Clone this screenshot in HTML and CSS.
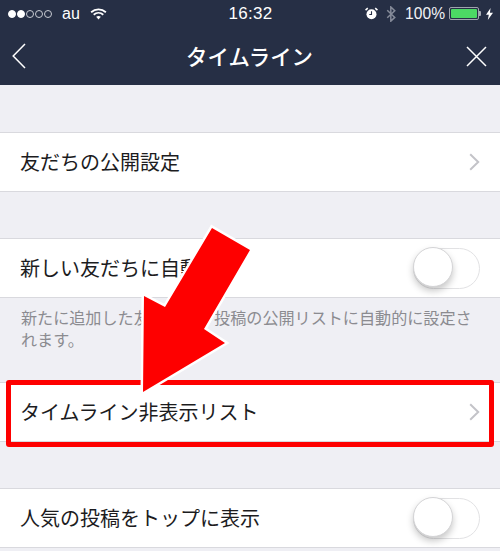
FILE: index.html
```html
<!DOCTYPE html>
<html lang="ja">
<head>
<meta charset="utf-8">
<title>タイムライン</title>
<link rel="stylesheet" href="styles.css">
</head>
<body>
<div class="page">
  <header class="header">
    <div class="status">
      <div class="status-left">
        <span class="dots"><i class="dot on"></i><i class="dot on"></i><i class="dot"></i><i class="dot"></i><i class="dot"></i></span>
        <span class="carrier">au</span>
        <svg class="wifi" width="17" height="12" viewBox="0 0 18 13"><path d="M1 4.6C5.6.4 12.4.4 17 4.6" fill="none" stroke="#fff" stroke-width="1.9"/><path d="M3.8 7.3c3-2.6 7.4-2.6 10.4 0" fill="none" stroke="#fff" stroke-width="1.9"/><path d="M6.5 9.6c1.5-1.1 3.5-1.1 5 0L9 12.4z" fill="#fff"/></svg>
      </div>
      <div class="clock">16:32</div>
      <div class="status-right">
        <svg class="alarm" width="13" height="13" viewBox="0 0 14 14"><circle cx="7" cy="7.8" r="5.4" fill="#fff"/><path d="M7 4.6v3.5H4.6" fill="none" stroke="#262f45" stroke-width="1.2"/><path d="M.6 3.4 3 1.2M13.4 3.4 11 1.2" stroke="#fff" stroke-width="1.6"/></svg>
        <svg class="bt" width="10" height="16" viewBox="0 0 10 17"><path d="M1 4.5l8 7.6-4.2 4V1l4.2 4-8 7.5" fill="none" stroke="#858b99" stroke-width="1.6"/></svg>
        <span class="percent">100%</span>
        <span class="battery"><span class="battery-fill"></span></span>
        <span class="battery-cap"></span>
        <svg class="bolt" width="7" height="12" viewBox="0 0 7 12"><path d="M4.6 0 0 6.8h2.8L1.8 12 7 4.8H3.9z" fill="#fff"/></svg>
      </div>
    </div>
    <nav class="nav">
      <svg class="nav-back" width="14" height="26" viewBox="0 0 14 26"><path d="M13 1 1.2 13 13 25" fill="none" stroke="#fff" stroke-width="1.5"/></svg>
      <h1 class="title">タイムライン</h1>
      <svg class="nav-close" width="21" height="21" viewBox="0 0 21 21"><path d="M1 1l19 19M20 1 1 20" fill="none" stroke="#fff" stroke-width="1.5"/></svg>
    </nav>
  </header>

  <section class="group">
    <div class="row">
      <span>友だちの公開設定</span>
      <svg class="chev" width="11" height="18" viewBox="0 0 11 18"><path d="M1.2 1.2 9.2 9l-8 7.8" fill="none" stroke="#c3c3c8" stroke-width="2"/></svg>
    </div>
  </section>

  <section class="group">
    <div class="row">
      <span>新しい友だちに自動化</span>
      <span class="switch"><span class="knob"></span></span>
    </div>
  </section>
  <p class="note">新たに追加した友だちを、投稿の公開リストに自動的に設定されます。</p>

  <section class="group group-tight">
    <div class="row">
      <span>タイムライン非表示リスト</span>
      <svg class="chev" width="11" height="18" viewBox="0 0 11 18"><path d="M1.2 1.2 9.2 9l-8 7.8" fill="none" stroke="#c3c3c8" stroke-width="2"/></svg>
    </div>
  </section>

  <section class="group">
    <div class="row">
      <span>人気の投稿をトップに表示</span>
      <span class="switch"><span class="knob"></span></span>
    </div>
  </section>

  <div class="highlight"></div>
  <svg class="arrow" width="500" height="551" viewBox="0 0 500 551"><path class="arrow-shape" d="M212 228 250 250 204 329 225 343 143 392 144 296 165 307Z"/></svg>
</div>
</body>
</html>
```
FILE: styles.css
```css
* { box-sizing: border-box; }
html, body { margin: 0; padding: 0; }
body {
  background: #efeff4;
  font-family: "Noto Sans CJK JP", "Liberation Sans", sans-serif;
  overflow: hidden;
}
.page {
  position: relative;
  width: 500px;
  height: 551px;
  overflow: hidden;
  background: #efeff4;
}
.header {
  height: 85px;
  background: #262f45;
  color: #fff;
}
.status {
  height: 27px;
  display: grid;
  grid-template-columns: 1fr auto 1fr;
  align-items: center;
  padding: 0 7px 0 8px;
  font-family: "Liberation Sans", sans-serif;
  font-size: 16px;
}
.status-left, .status-right { display: flex; align-items: center; }
.status-right { justify-content: flex-end; }
.dots { display: flex; gap: 1px; }
.dot {
  width: 8px;
  height: 8px;
  border-radius: 50%;
  border: 1px solid #c9ccd3;
}
.dot.on { background: #fff; border-color: #fff; }
.carrier { margin-left: 10px; }
.wifi { margin-left: 10px; }
.clock { font-size: 17px; letter-spacing: .3px; }
.bt { margin-left: 8px; }
.percent { margin-left: 9px; color: #f2f3f5; font-size: 15.6px; }
.battery {
  margin-left: 4px;
  width: 30px;
  height: 13px;
  border: 1px solid #9fa3ad;
  border-radius: 2px;
  padding: 1px;
  display: flex;
}
.battery-fill { flex: 1; background: #4cd964; border-radius: 1px; }
.battery-cap { width: 2px; height: 5px; background: #a8acb5; border-radius: 0 1px 1px 0; }
.bolt { margin-left: 5px; }
.nav {
  height: 58px;
  display: grid;
  grid-template-columns: 1fr auto 1fr;
  align-items: center;
  padding: 0 13px 0 12px;
}
.nav-close { justify-self: end; }
.title {
  margin: 0;
  font-size: 21.4px;
  font-weight: 500;
  line-height: 1;
}
.group {
  margin-top: 47px;
  background: #fff;
  border-top: 1px solid #d9d9de;
  border-bottom: 1px solid #d9d9de;
}
.group + .group { margin-top: 46px; }
.group-tight { margin-top: 0; }
.row {
  height: 58px;
  display: flex;
  align-items: center;
  justify-content: space-between;
  padding: 0 20px 2px 20px;
  font-size: 20px;
  color: #1c1c1e;
}
.chev { margin-bottom: -2px; }
.switch {
  position: relative;
  width: 67px;
  height: 41px;
  border-radius: 21px;
  background: #fff;
  border: 1.5px solid #e2e2e4;
  margin-bottom: -2px;
}
.knob {
  position: absolute;
  left: -1.5px;
  top: -1.5px;
  width: 40px;
  height: 40px;
  border-radius: 50%;
  background: #fff;
  border: 1px solid #d4d4d6;
  box-shadow: 0 4px 7px rgba(0, 0, 0, .22);
}
.note {
  margin: 0;
  height: 84px;
  padding: 8px 21px 0;
  font-size: 16.1px;
  line-height: 22px;
  color: #8b8b90;
}
.highlight {
  position: absolute;
  left: 6px;
  top: 380px;
  width: 488px;
  height: 67px;
  border: 5px solid #fe0000;
  border-radius: 3px;
}
.arrow {
  position: absolute;
  left: 0;
  top: 0;
}
.arrow-shape {
  fill: #fe0000;
  stroke: #fff;
  stroke-width: 5px;
  stroke-linejoin: miter;
  paint-order: stroke;
}
```
